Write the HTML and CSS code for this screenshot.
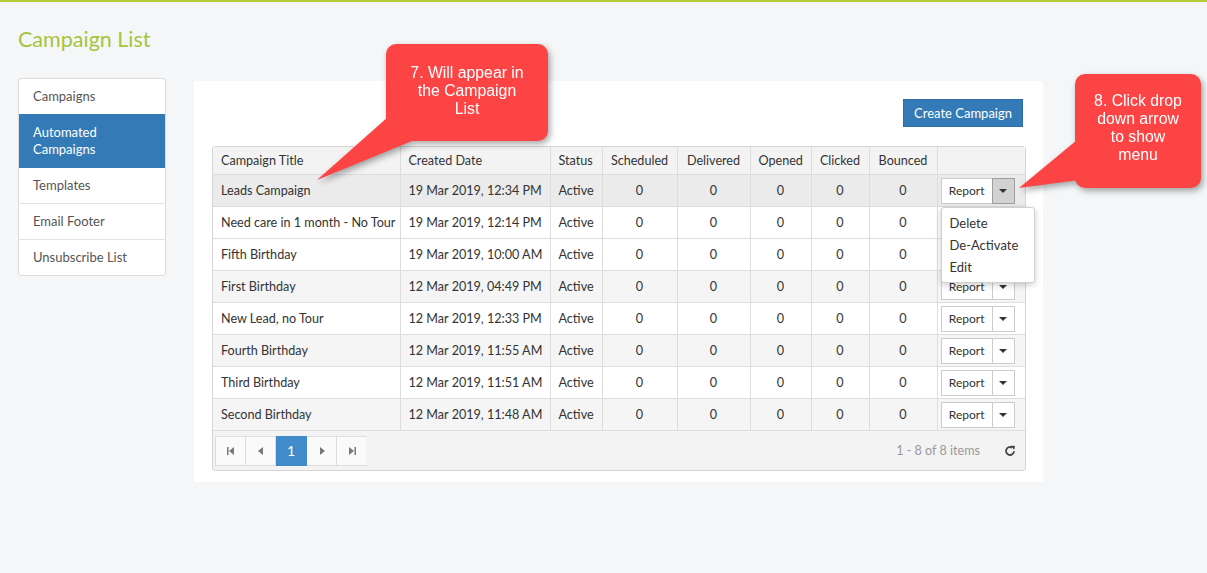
FILE: index.html
```html
<!DOCTYPE html>
<html>
<head>
	<title>Campaign List</title>
	<link rel="stylesheet" href="styles.css">
</head>
<body>
	<h2 class="page-title">Campaign List</h2>
	<div class="layout">
		<ul class="side-nav">
			<li>Campaigns</li>
			<li class="active">Automated Campaigns</li>
			<li>Templates</li>
			<li>Email Footer</li>
			<li>Unsubscribe List</li>
		</ul>

		<div class="panel">
			<div class="toolbar">
				<button class="btn-primary">Create Campaign</button>
			</div>
			<div class="grid">
				<table class="grid-table">
					<colgroup>
						<col style="width:187px"><col style="width:150px"><col style="width:52px">
						<col style="width:75px"><col style="width:73px"><col style="width:61px">
						<col style="width:58px"><col style="width:68px"><col style="width:88px">
					</colgroup>
					<thead>
						<tr>
							<th>Campaign Title</th>
							<th>Created Date</th>
							<th>Status</th>
							<th class="num">Scheduled</th>
							<th class="num">Delivered</th>
							<th class="num">Opened</th>
							<th class="num">Clicked</th>
							<th class="num">Bounced</th>
							<th></th>
						</tr>
					</thead>
					<tbody>
						<tr class="hover">
							<td>Leads Campaign</td><td>19 Mar 2019, 12:34 PM</td><td>Active</td>
							<td class="num">0</td><td class="num">0</td><td class="num">0</td><td class="num">0</td><td class="num">0</td>
							<td class="actions">
								<div class="btn-group">
									<span class="btn-report">Report</span><span class="btn-caret open"><i class="caret"></i></span>
									<ul class="menu">
										<li>Delete</li>
										<li>De-Activate</li>
										<li>Edit</li>
									</ul>
								</div>
							</td>
						</tr>
						<tr>
							<td>Need care in 1 month - No Tour</td><td>19 Mar 2019, 12:14 PM</td><td>Active</td>
							<td class="num">0</td><td class="num">0</td><td class="num">0</td><td class="num">0</td><td class="num">0</td>
							<td class="actions"><div class="btn-group"><span class="btn-report">Report</span><span class="btn-caret"><i class="caret"></i></span></div></td>
						</tr>
						<tr>
							<td>Fifth Birthday</td><td>19 Mar 2019, 10:00 AM</td><td>Active</td>
							<td class="num">0</td><td class="num">0</td><td class="num">0</td><td class="num">0</td><td class="num">0</td>
							<td class="actions"><div class="btn-group"><span class="btn-report">Report</span><span class="btn-caret"><i class="caret"></i></span></div></td>
						</tr>
						<tr class="alt">
							<td>First Birthday</td><td>12 Mar 2019, 04:49 PM</td><td>Active</td>
							<td class="num">0</td><td class="num">0</td><td class="num">0</td><td class="num">0</td><td class="num">0</td>
							<td class="actions"><div class="btn-group"><span class="btn-report">Report</span><span class="btn-caret"><i class="caret"></i></span></div></td>
						</tr>
						<tr>
							<td>New Lead, no Tour</td><td>12 Mar 2019, 12:33 PM</td><td>Active</td>
							<td class="num">0</td><td class="num">0</td><td class="num">0</td><td class="num">0</td><td class="num">0</td>
							<td class="actions"><div class="btn-group"><span class="btn-report">Report</span><span class="btn-caret"><i class="caret"></i></span></div></td>
						</tr>
						<tr class="alt">
							<td>Fourth Birthday</td><td>12 Mar 2019, 11:55 AM</td><td>Active</td>
							<td class="num">0</td><td class="num">0</td><td class="num">0</td><td class="num">0</td><td class="num">0</td>
							<td class="actions"><div class="btn-group"><span class="btn-report">Report</span><span class="btn-caret"><i class="caret"></i></span></div></td>
						</tr>
						<tr>
							<td>Third Birthday</td><td>12 Mar 2019, 11:51 AM</td><td>Active</td>
							<td class="num">0</td><td class="num">0</td><td class="num">0</td><td class="num">0</td><td class="num">0</td>
							<td class="actions"><div class="btn-group"><span class="btn-report">Report</span><span class="btn-caret"><i class="caret"></i></span></div></td>
						</tr>
						<tr class="alt">
							<td>Second Birthday</td><td>12 Mar 2019, 11:48 AM</td><td>Active</td>
							<td class="num">0</td><td class="num">0</td><td class="num">0</td><td class="num">0</td><td class="num">0</td>
							<td class="actions"><div class="btn-group"><span class="btn-report">Report</span><span class="btn-caret"><i class="caret"></i></span></div></td>
						</tr>
					</tbody>
				</table>
				<div class="pager">
					<div class="pager-nav">
						<span class="pg"><svg width="8" height="8" viewBox="0 0 8 8"><rect x="0" y="0" width="1.5" height="8" fill="#777"/><polygon points="7,0 7,8 2,4" fill="#777"/></svg></span>
						<span class="pg"><svg width="6" height="8" viewBox="0 0 6 8"><polygon points="5,0 5,8 0,4" fill="#777"/></svg></span>
						<span class="pg current">1</span>
						<span class="pg"><svg width="6" height="8" viewBox="0 0 6 8"><polygon points="1,0 1,8 6,4" fill="#777"/></svg></span>
						<span class="pg last"><svg width="8" height="8" viewBox="0 0 8 8"><polygon points="1,0 1,8 6,4" fill="#777"/><rect x="6.5" y="0" width="1.5" height="8" fill="#777"/></svg></span>
					</div>
					<div class="pager-info">1 - 8 of 8 items</div>
					<svg class="refresh" width="12" height="12" viewBox="0 0 12 12">
						<path d="M10 6.2A4 4 0 1 1 8.4 2.8" fill="none" stroke="#444" stroke-width="1.8"/>
						<polygon points="7,0.5 11,1 10.2,5" fill="#444"/>
					</svg>
				</div>
			</div>
		</div>
	</div>

	<!-- annotation callouts -->
	<div class="callout callout-7">
		<svg class="tail" width="100" height="80" viewBox="-70 60 100 80"><polygon points="2,73 26,97 -69,136" fill="#fd4444"/></svg>
		<p>7. Will appear in<br>the Campaign<br>List</p>
	</div>
	<div class="callout callout-8">
		<svg class="tail" width="70" height="60" viewBox="-58 60 70 60"><polygon points="2,66 4,106 -56,114" fill="#fd4444"/></svg>
		<p>8. Click drop<br>down arrow<br>to show<br>menu</p>
	</div>
</body>
</html>
```

FILE: styles.css
```css
body {
	margin: 0;
	font-family: Lato, "Open Sans", sans-serif;
	font-size: 13px;
	color: #333;
	background-color: #f5f6f8;
	border-top: 2px solid #b4cc35;
	min-height: 571px;
	position: relative;
}

.page-title {
	margin: 0;
	padding: 24px 18px 0;
	font-size: 21.5px;
	font-weight: normal;
	color: #a6c43d;
	line-height: 26px;
}

.layout {
	display: flex;
	align-items: flex-start;
	gap: 28px;
	padding: 26px 18px 0;
}

/* side navigation */
.side-nav {
	list-style: none;
	margin: 0;
	padding: 0;
	width: 146px;
	background: #fff;
	border: 1px solid #dcdcdc;
	border-radius: 3px;
	overflow: hidden;
}
.side-nav li {
	padding: 9px 14px;
	line-height: 17px;
	color: #555;
	border-top: 1px solid #e2e2e2;
}
.side-nav li:first-child {
	border-top: none;
}
.side-nav li.active {
	background: #337ab7;
	color: #fff;
	border-top: none;
	padding: 10px 14px;
}
.side-nav li.active + li {
	border-top: none;
}

/* main panel */
.panel {
	margin-top: 3px;
	width: 814px;
	background: #fff;
	padding: 18px 17px 11px 18px;
}
.toolbar {
	display: flex;
	justify-content: flex-end;
	padding-right: 3px;
	margin-bottom: 19px;
}
.btn-primary {
	font-family: Lato, sans-serif;
	font-size: 13px;
	color: #fff;
	background: #337ab7;
	border: 1px solid #2e6da4;
	height: 28px;
	padding: 0 10px;
	cursor: pointer;
}

/* grid */
.grid {
	border: 1px solid #d5d5d5;
	border-radius: 3px;
	background: #f3f3f3;
	font-size: 12.6px;
}
.grid-table {
	width: 812px;
	table-layout: fixed;
	border-collapse: collapse;
	background: #fff;
}
.grid-table th,
.grid-table td {
	border-right: 1px solid #ddd;
	border-bottom: 1px solid #ddd;
	padding: 0 8px;
	text-align: left;
	white-space: nowrap;
	font-weight: normal;
	overflow: hidden;
}
.grid-table th:last-child,
.grid-table td:last-child {
	border-right: none;
}
.grid-table th {
	background: #f3f3f3;
	height: 27px;
}
.grid-table td {
	height: 31px;
}
.grid-table .num {
	text-align: center;
}
.grid-table tr.alt td {
	background: #f5f5f5;
}
.grid-table tr.hover td {
	background: #ebebeb;
}
.grid-table td.actions {
	padding: 0 3px;
	overflow: visible;
}

.btn-group {
	position: relative;
	display: flex;
	width: 74px;
	height: 26px;
	margin-top: 1px;
}
.btn-report {
	width: 51px;
	border: 1px solid #ccc;
	border-right: none;
	background: #fff;
	font-size: 12px;
	line-height: 24px;
	text-align: center;
}
.btn-caret {
	width: 21px;
	border: 1px solid #ccc;
	background: #fff;
	display: flex;
	align-items: center;
	justify-content: center;
}
.btn-caret.open {
	background: #d2d2d2;
	border-color: #9e9e9e;
}
.caret {
	width: 0;
	height: 0;
	border-left: 4px solid transparent;
	border-right: 4px solid transparent;
	border-top: 4px solid #333;
}

.menu {
	position: absolute;
	top: 29px;
	left: 0;
	z-index: 5;
	list-style: none;
	margin: 0;
	padding: 4px 0 4px;
	width: 92px;
	background: #fff;
	border: 1px solid #d0d0d0;
	border-radius: 3px;
	box-shadow: 0 2px 6px rgba(0, 0, 0, 0.2);
	font-size: 13px;
}
.menu li {
	padding: 0 8px;
	line-height: 22px;
	color: #333;
}

/* pager */
.pager {
	display: flex;
	align-items: center;
	height: 39px;
	padding: 0 2px;
}
.pager-nav {
	display: flex;
}
.pg {
	width: 30px;
	height: 30px;
	box-sizing: border-box;
	border: 1px solid #ddd;
	border-left: none;
	background: #fafafa;
	display: flex;
	align-items: center;
	justify-content: center;
}
.pg:first-child {
	border-left: 1px solid #ddd;
	width: 31px;
}
.pg.last {
	border-right-color: #f3f3f3;
}
.pg.current {
	background: #428bca;
	border-color: #428bca;
	color: #fff;
	font-size: 14px;
	width: 31px;
}
.pager-info {
	margin-left: auto;
	color: #999;
}
.refresh {
	margin: 0 7px 0 24px;
}

/* annotation callouts */
.callout {
	position: absolute;
	background: #fd4444;
	border-radius: 10px;
	filter: drop-shadow(2px 3px 3px rgba(0, 0, 0, 0.35));
	font-family: "Liberation Sans", Arial, sans-serif;
	font-size: 15.8px;
	line-height: 18px;
	color: #fff;
	text-align: center;
	z-index: 10;
}
.callout p {
	margin: 0;
	position: relative;
}
.callout .tail {
	position: absolute;
	overflow: visible;
}
.callout-7 {
	left: 386px;
	top: 42px;
	width: 162px;
	height: 97px;
}
.callout-7 p {
	padding-top: 20px;
}
.callout-7 .tail {
	left: -70px;
	top: 60px;
}
.callout-8 {
	left: 1075px;
	top: 72px;
	width: 126px;
	height: 114px;
}
.callout-8 p {
	padding-top: 18px;
}
.callout-8 .tail {
	left: -58px;
	top: 60px;
}
```
